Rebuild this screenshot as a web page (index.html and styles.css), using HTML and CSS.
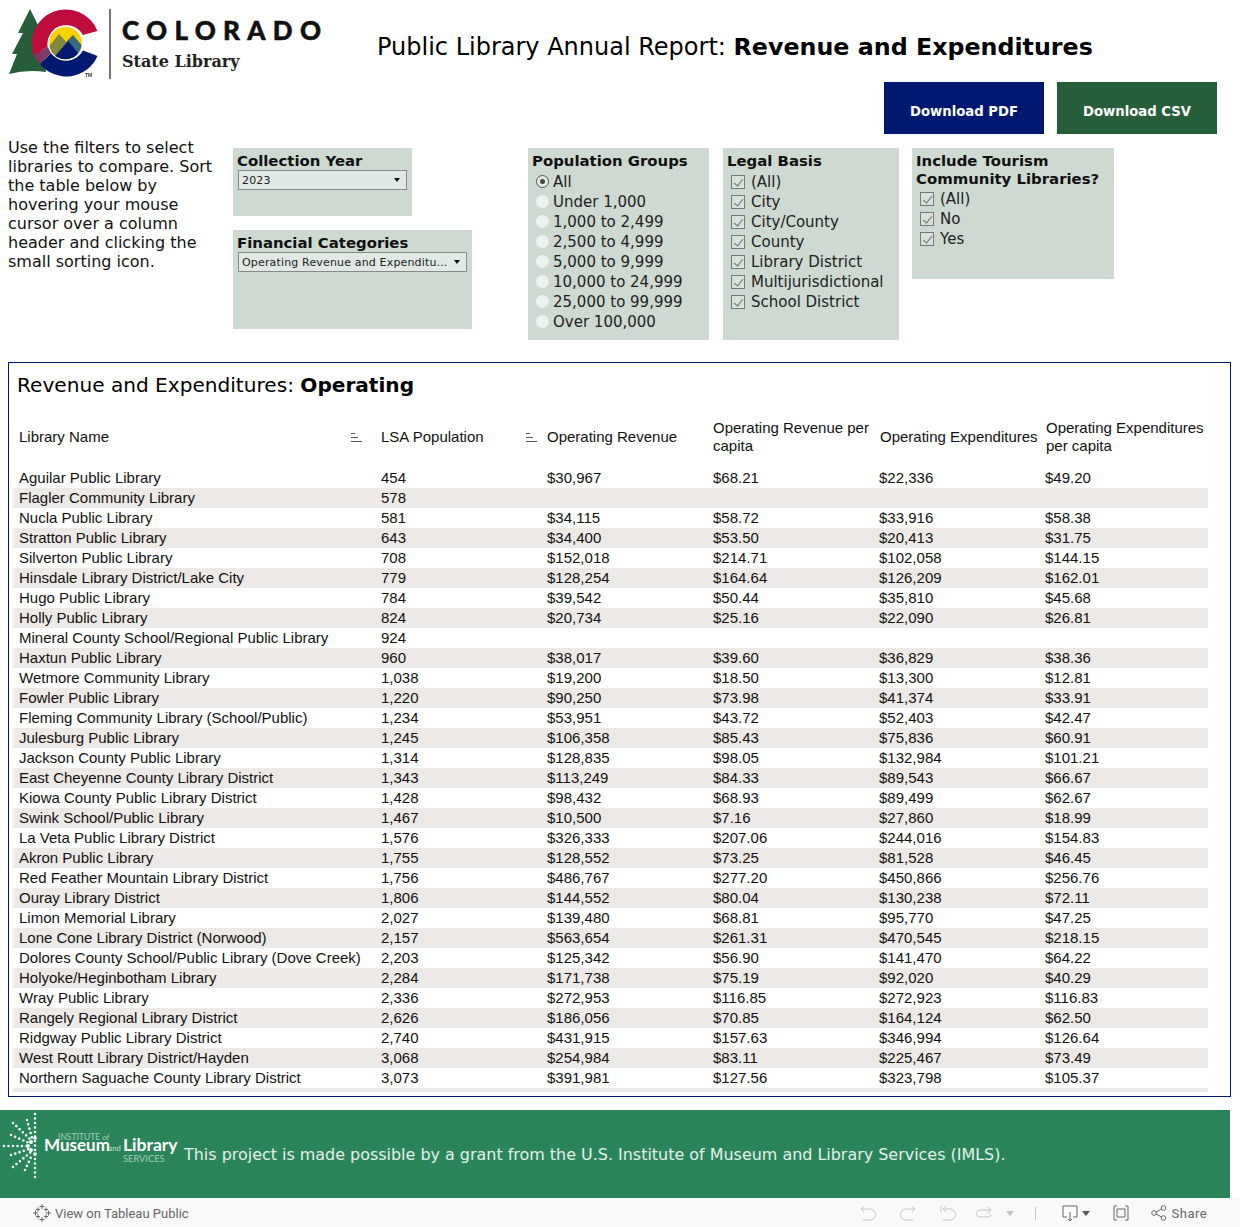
FILE: index.html
```html
<!DOCTYPE html>
<html lang="en">
<head>
<meta charset="UTF-8">
<meta name="viewport" content="width=device-width, initial-scale=1.0">
<title>Public Library Annual Report: Revenue and Expenditures</title>
<link rel="stylesheet" href="styles.css">
</head>
<body>

    <header class="top">
        <div class="brand">
            <svg class="brand-mark" width="104" height="82" viewBox="0 0 104 82">
                <!-- tree -->
                <path d="M30 9 L39 27 L46 72 Q27 69 9 74 L17 54 L12 54 L23 33 L18 33 Z" fill="#255e39"/>
                <!-- C ring -->
                <path d="M97.500 31 A34 34 0 0 0 34 56 L47.500 46.500 A19 19 0 0 1 83 35 Z" fill="#bf0d3e"/>
                <path d="M40 64 A34 34 0 0 0 97.500 56 L83 50.500 A19 19 0 0 1 51 53 Z" fill="#001970"/>
                <path d="M34 56 L47.500 46.500 L51 53 L40 64 Z" fill="#7d3a64"/>
                <!-- inner circle -->
                <circle cx="65.500" cy="43" r="17.500" fill="#fff"/>
                <clipPath id="inner"><circle cx="65.500" cy="43" r="16.300"/></clipPath>
                <g clip-path="url(#inner)">
                    <rect x="48" y="26" width="36" height="34" fill="#ffd100"/>
                    <path d="M46 50 L59 34 L72 48 L60 62 L46 62 Z" fill="#7f8a3c"/>
                    <path d="M67 41 L73 35 L86 50 L80 62 L70 56 Z" fill="#38697f"/>
                    <path d="M50 62 L68 41 L84 60 L84 64 L50 64 Z" fill="#001970"/>
                </g>
                <text class="brand-tm" x="85" y="77">TM</text>
            </svg>
            <div class="brand-text">
                <div class="brand-state">COLORADO</div>
                <div class="brand-lib">State Library</div>
            </div>
        </div>
        <h1 class="page-title">Public Library Annual Report: <b>Revenue and Expenditures</b></h1>
    </header>

    <div class="actions">
        <a class="btn btn-pdf" href="#">Download PDF</a>
        <a class="btn btn-csv" href="#">Download CSV</a>
    </div>

    <section class="filters">
        <p class="intro">Use the filters to select libraries to compare. Sort the table below by hovering your mouse cursor over a column header and clicking the small sorting icon.</p>

        <div class="filter-stack">
            <div class="card card-year">
                <div class="card-title">Collection Year</div>
                <div class="select"><span>2023</span><i class="caret"></i></div>
            </div>
            <div class="card card-cat">
                <div class="card-title">Financial Categories</div>
                <div class="select"><span>Operating Revenue and Expenditu...</span><i class="caret"></i></div>
            </div>
        </div>

        <div class="card card-pop">
            <div class="card-title">Population Groups</div>
            <div class="opt"><i class="radio on"></i>All</div>
            <div class="opt"><i class="radio"></i>Under 1,000</div>
            <div class="opt"><i class="radio"></i>1,000 to 2,499</div>
            <div class="opt"><i class="radio"></i>2,500 to 4,999</div>
            <div class="opt"><i class="radio"></i>5,000 to 9,999</div>
            <div class="opt"><i class="radio"></i>10,000 to 24,999</div>
            <div class="opt"><i class="radio"></i>25,000 to 99,999</div>
            <div class="opt"><i class="radio"></i>Over 100,000</div>
        </div>

        <div class="card card-legal">
            <div class="card-title">Legal Basis</div>
            <div class="opt"><i class="check"></i>(All)</div>
            <div class="opt"><i class="check"></i>City</div>
            <div class="opt"><i class="check"></i>City/County</div>
            <div class="opt"><i class="check"></i>County</div>
            <div class="opt"><i class="check"></i>Library District</div>
            <div class="opt"><i class="check"></i>Multijurisdictional</div>
            <div class="opt"><i class="check"></i>School District</div>
        </div>

        <div class="card card-tour">
            <div class="card-title">Include Tourism Community Libraries?</div>
            <div class="opt"><i class="check"></i>(All)</div>
            <div class="opt"><i class="check"></i>No</div>
            <div class="opt"><i class="check"></i>Yes</div>
        </div>
    </section>

    <section class="panel">
        <h2 class="panel-title">Revenue and Expenditures: <b>Operating</b></h2>
        <div class="table-wrap">
            <table>
                <colgroup>
                    <col class="col-name"><col class="col-num"><col class="col-num"><col class="col-num"><col class="col-num"><col class="col-last">
                </colgroup>
                <thead>
                    <tr>
                        <th><div class="th-sort">Library Name<i class="sort"></i></div></th>
                        <th><div class="th-sort">LSA Population<i class="sort"></i></div></th>
                        <th>Operating Revenue</th>
                        <th>Operating Revenue per capita</th>
                        <th class="th-shift">Operating Expenditures</th>
                        <th class="th-shift">Operating Expenditures per capita</th>
                    </tr>
                </thead>
                <tbody>
                    <tr><td>Aguilar Public Library</td><td>454</td><td>$30,967</td><td>$68.21</td><td>$22,336</td><td>$49.20</td></tr>
                    <tr><td>Flagler Community Library</td><td>578</td><td></td><td></td><td></td><td></td></tr>
                    <tr><td>Nucla Public Library</td><td>581</td><td>$34,115</td><td>$58.72</td><td>$33,916</td><td>$58.38</td></tr>
                    <tr><td>Stratton Public Library</td><td>643</td><td>$34,400</td><td>$53.50</td><td>$20,413</td><td>$31.75</td></tr>
                    <tr><td>Silverton Public Library</td><td>708</td><td>$152,018</td><td>$214.71</td><td>$102,058</td><td>$144.15</td></tr>
                    <tr><td>Hinsdale Library District/Lake City</td><td>779</td><td>$128,254</td><td>$164.64</td><td>$126,209</td><td>$162.01</td></tr>
                    <tr><td>Hugo Public Library</td><td>784</td><td>$39,542</td><td>$50.44</td><td>$35,810</td><td>$45.68</td></tr>
                    <tr><td>Holly Public Library</td><td>824</td><td>$20,734</td><td>$25.16</td><td>$22,090</td><td>$26.81</td></tr>
                    <tr><td>Mineral County School/Regional Public Library</td><td>924</td><td></td><td></td><td></td><td></td></tr>
                    <tr><td>Haxtun Public Library</td><td>960</td><td>$38,017</td><td>$39.60</td><td>$36,829</td><td>$38.36</td></tr>
                    <tr><td>Wetmore Community Library</td><td>1,038</td><td>$19,200</td><td>$18.50</td><td>$13,300</td><td>$12.81</td></tr>
                    <tr><td>Fowler Public Library</td><td>1,220</td><td>$90,250</td><td>$73.98</td><td>$41,374</td><td>$33.91</td></tr>
                    <tr><td>Fleming Community Library (School/Public)</td><td>1,234</td><td>$53,951</td><td>$43.72</td><td>$52,403</td><td>$42.47</td></tr>
                    <tr><td>Julesburg Public Library</td><td>1,245</td><td>$106,358</td><td>$85.43</td><td>$75,836</td><td>$60.91</td></tr>
                    <tr><td>Jackson County Public Library</td><td>1,314</td><td>$128,835</td><td>$98.05</td><td>$132,984</td><td>$101.21</td></tr>
                    <tr><td>East Cheyenne County Library District</td><td>1,343</td><td>$113,249</td><td>$84.33</td><td>$89,543</td><td>$66.67</td></tr>
                    <tr><td>Kiowa County Public Library District</td><td>1,428</td><td>$98,432</td><td>$68.93</td><td>$89,499</td><td>$62.67</td></tr>
                    <tr><td>Swink School/Public Library</td><td>1,467</td><td>$10,500</td><td>$7.16</td><td>$27,860</td><td>$18.99</td></tr>
                    <tr><td>La Veta Public Library District</td><td>1,576</td><td>$326,333</td><td>$207.06</td><td>$244,016</td><td>$154.83</td></tr>
                    <tr><td>Akron Public Library</td><td>1,755</td><td>$128,552</td><td>$73.25</td><td>$81,528</td><td>$46.45</td></tr>
                    <tr><td>Red Feather Mountain Library District</td><td>1,756</td><td>$486,767</td><td>$277.20</td><td>$450,866</td><td>$256.76</td></tr>
                    <tr><td>Ouray Library District</td><td>1,806</td><td>$144,552</td><td>$80.04</td><td>$130,238</td><td>$72.11</td></tr>
                    <tr><td>Limon Memorial Library</td><td>2,027</td><td>$139,480</td><td>$68.81</td><td>$95,770</td><td>$47.25</td></tr>
                    <tr><td>Lone Cone Library District (Norwood)</td><td>2,157</td><td>$563,654</td><td>$261.31</td><td>$470,545</td><td>$218.15</td></tr>
                    <tr><td>Dolores County School/Public Library (Dove Creek)</td><td>2,203</td><td>$125,342</td><td>$56.90</td><td>$141,470</td><td>$64.22</td></tr>
                    <tr><td>Holyoke/Heginbotham Library</td><td>2,284</td><td>$171,738</td><td>$75.19</td><td>$92,020</td><td>$40.29</td></tr>
                    <tr><td>Wray Public Library</td><td>2,336</td><td>$272,953</td><td>$116.85</td><td>$272,923</td><td>$116.83</td></tr>
                    <tr><td>Rangely Regional Library District</td><td>2,626</td><td>$186,056</td><td>$70.85</td><td>$164,124</td><td>$62.50</td></tr>
                    <tr><td>Ridgway Public Library District</td><td>2,740</td><td>$431,915</td><td>$157.63</td><td>$346,994</td><td>$126.64</td></tr>
                    <tr><td>West Routt Library District/Hayden</td><td>3,068</td><td>$254,984</td><td>$83.11</td><td>$225,467</td><td>$73.49</td></tr>
                    <tr><td>Northern Saguache County Library District</td><td>3,073</td><td>$391,981</td><td>$127.56</td><td>$323,798</td><td>$105.37</td></tr>
                    <tr><td></td><td></td><td>$</td><td>$</td><td>$</td><td>$</td></tr>
                </tbody>
            </table>
        </div>
    </section>

    <footer class="grant">
        <svg class="imls" width="180" height="88" viewBox="0 0 180 88">
            <g class="imls-rays">
                <line x1="35" y1="4" x2="35" y2="68"/>
                <line x1="4" y1="36" x2="30" y2="36"/>
                <line x1="13" y1="13" x2="31" y2="30"/>
                <line x1="13" y1="57" x2="31" y2="42"/>
                <line x1="27" y1="10" x2="32" y2="28"/>
                <line x1="25" y1="60" x2="32" y2="45"/>
                <line x1="11" y1="25" x2="29" y2="33"/>
                <line x1="11" y1="45" x2="29" y2="39"/>
            </g>
            <g fill="#fff">
                <circle cx="31" cy="32" r="2"/>
                <circle cx="31" cy="40" r="2"/>
                <circle cx="28" cy="36" r="2"/>
                <circle cx="35" cy="28" r="1.800"/>
                <circle cx="35" cy="44" r="1.800"/>
            </g>
            <text class="imls-sm" x="58" y="30">INSTITUTE <tspan font-style="italic">of</tspan></text>
            <text class="imls-lg" x="44" y="41">Museum</text>
            <text class="imls-and" x="108.500" y="41">and</text>
            <text class="imls-lib" x="123" y="41">Library</text>
            <text class="imls-sv" x="123" y="52">SERVICES</text>
        </svg>
        <p class="grant-text">This project is made possible by a grant from the U.S. Institute of Museum and Library Services (IMLS).</p>
    </footer>

    <div class="toolbar">
        <div class="tb-left">
            <svg width="18" height="18" viewBox="0 0 18 18" class="tb-icon">
                <path d="M9 0v5M6.500 2.500h5M9 13v5M6.500 15.500h5M2.500 6.500v5M0 9h5M15.500 6.500v5M13 9h5M5 3.500v4M3 5.500h4M13 3.500v4M11 5.500h4M5 10.500v4M3 12.500h4M13 10.500v4M11 12.500h4"/>
            </svg>
            <span>View on Tableau Public</span>
        </div>
        <div class="tb-right">
            <svg class="tb-icon tb-off" width="16" height="16" viewBox="0 0 16 16"><path d="M4 1L1 4l3 3M1 4h9a5 5 0 0 1 0 11H3"/></svg>
            <svg class="tb-icon tb-off" width="16" height="16" viewBox="0 0 16 16"><path d="M12 1l3 3-3 3M15 4H6a5 5 0 0 0 0 11h7"/></svg>
            <svg class="tb-icon tb-off" width="16" height="16" viewBox="0 0 16 16"><path d="M1 1v6M6 1L3 4l3 3M3 4h7a5 5 0 0 1 0 11H3"/></svg>
            <svg class="tb-icon tb-off tb-refresh" width="16" height="16" viewBox="0 0 16 16"><path d="M12 2l3 3-3 3M14 5H4a3.500 3.500 0 0 0 0 7h8a3 3 0 0 0 3-3"/></svg>
            <i class="tb-caret tb-caret-off"></i>
            <i class="tb-sep"></i>
            <div class="tb-group">
                <svg class="tb-icon tb-on" width="16" height="17" viewBox="0 0 16 17"><path d="M5 12H1V1h14v11h-4M8 7v9M6 14l2 2 2-2"/></svg>
                <i class="tb-caret"></i>
            </div>
            <svg class="tb-icon tb-on tb-full" width="16" height="16" viewBox="0 0 16 16"><path d="M4 1H1v14h3M12 1h3v14h-3M4 4h8v8H4z"/></svg>
            <div class="tb-share">
                <svg class="tb-icon tb-on" width="16" height="16" viewBox="0 0 16 16"><circle cx="3" cy="8" r="2.300"/><circle cx="12.500" cy="3" r="2.300"/><circle cx="12.500" cy="13" r="2.300"/><path d="M5 7l5.500-3M5 9l5.500 3"/></svg>
                <span class="tb-share-label">Share</span>
            </div>
        </div>
    </div>

</body>
</html>
```

FILE: styles.css
```css
* {
    box-sizing: border-box;
}
html, body {
    margin: 0;
    height: 1227px;
    overflow: hidden;
}
body {
    width: 1240px;
    background: #fff;
    color: #000;
    font-family: "DejaVu Sans", sans-serif;
}
a {
    color: inherit;
    text-decoration: none;
}
h1, h2, p {
    margin: 0;
    font-weight: normal;
}

/* header */
.top {
    display: flex;
    align-items: flex-start;
    height: 82px;
}
.brand {
    display: flex;
    width: 377px;
    height: 82px;
}
.brand-mark {
    flex: none;
    filter: blur(0.4px);
}
.brand-tm {
    font-family: "Liberation Sans", sans-serif;
    font-size: 5px;
    font-weight: bold;
    fill: #333;
}
.brand-text {
    height: 70px;
    margin: 9px 0 0 5px;
    padding: 9px 0 0 11px;
    border-left: 2px solid #777;
}
.brand-state {
    font-family: Lato, sans-serif;
    font-weight: 900;
    font-size: 26px;
    line-height: 24px;
    letter-spacing: 7.300px;
    color: #111;
    -webkit-text-stroke: 0.5px #111;
}
.brand-lib {
    margin-top: 9px;
    font-family: "DejaVu Serif", serif;
    font-weight: bold;
    font-size: 16px;
    line-height: 22px;
    color: #222;
}
.page-title {
    margin-top: 31px;
    font-size: 24px;
    line-height: 32px;
    white-space: nowrap;
}
.page-title b {
    font-size: 23.750px;
}

/* buttons */
.actions {
    display: flex;
    justify-content: flex-end;
    gap: 13px;
    padding-right: 23px;
}
.btn {
    display: flex;
    align-items: center;
    justify-content: center;
    width: 160px;
    height: 52px;
    padding-top: 4px;
    color: #fff;
    font-family: "DejaVu Sans Condensed", "DejaVu Sans", sans-serif;
    font-stretch: condensed;
    font-weight: bold;
    font-size: 14.700px;
}
.btn-pdf {
    background: #001970;
}
.btn-csv {
    background: #255e39;
}

/* filters */
.filters {
    display: flex;
    align-items: flex-start;
    height: 228px;
    padding-left: 8px;
}
.intro {
    width: 225px;
    padding-right: 8px;
    margin-top: 4px;
    font-size: 16px;
    line-height: 19px;
    color: #111;
}
.filter-stack {
    display: flex;
    flex-direction: column;
    gap: 14px;
    margin-top: 14px;
}
.card {
    background: #cdd9d1;
    padding: 4px;
    font-size: 15px;
}
.card-title {
    font-weight: bold;
    font-size: 14.900px;
    line-height: 18px;
    color: #111;
}
.card-year {
    width: 179px;
    height: 68px;
}
.card-cat {
    width: 239px;
    height: 99px;
}
.card-pop {
    width: 181px;
    height: 192px;
    margin: 14px 0 0 56px;
}
.card-legal {
    width: 176px;
    height: 192px;
    margin: 14px 0 0 14px;
}
.card-tour {
    width: 202px;
    height: 131px;
    margin: 14px 0 0 13px;
}
.select {
    display: flex;
    align-items: center;
    justify-content: space-between;
    height: 20px;
    margin: 0 1px;
    padding: 0 6px 0 3px;
    background: #e0e9e4;
    border: 1px solid #888;
    font-size: 11px;
    letter-spacing: 0.160px;
    white-space: nowrap;
    color: #222;
}
.caret {
    border: 3.500px solid transparent;
    border-top: 4px solid #111;
    border-bottom: 0;
}
.opt {
    display: flex;
    align-items: center;
    height: 20px;
    padding-left: 4px;
    color: #222;
}
.card-title + .opt {
    margin-top: 2px;
}
.card-tour .card-title + .opt {
    margin-top: 1px;
}
.radio {
    position: relative;
    flex: none;
    width: 13px;
    height: 13px;
    margin: 0 4px 2px 0;
    border-radius: 50%;
    background: #eef2ef;
}
.radio.on {
    border: 1px solid #555;
    background: #e4ebe6;
}
.radio.on::after {
    content: "";
    position: absolute;
    left: 3px;
    top: 3px;
    width: 5px;
    height: 5px;
    border-radius: 50%;
    background: #444;
}
.check {
    position: relative;
    flex: none;
    width: 14px;
    height: 14px;
    margin: 0 6px 1px 0;
    border: 1px solid #777;
    background: #d8e2dc;
}
.check::after {
    content: "";
    position: absolute;
    left: 4px;
    top: 1px;
    width: 4px;
    height: 8px;
    border-right: 1px solid #666;
    border-bottom: 1px solid #666;
    transform: rotate(38deg);
}

/* table panel */
.panel {
    width: 1223px;
    height: 735px;
    margin-left: 8px;
    padding: 0 0 4px 4px;
    border: 1px solid #001970;
}
.panel-title {
    height: 55px;
    padding: 9px 0 0 4px;
    font-size: 20.100px;
    line-height: 26px;
}
.table-wrap {
    height: 674px;
    overflow: hidden;
}
table {
    width: 1195px;
    table-layout: fixed;
    border-collapse: collapse;
    font-family: "Liberation Sans", sans-serif;
    font-size: 15px;
    color: #111;
}
.col-name {
    width: 362px;
}
.col-num {
    width: 166px;
}
.col-last {
    width: 169px;
}
th {
    height: 50px;
    padding: 0 4px 12px 6px;
    font-weight: normal;
    line-height: 18px;
    text-align: left;
}
.th-shift {
    padding-right: 0;
    padding-left: 7px;
}
.th-shift:last-child {
    padding-right: 4px;
}
.th-sort {
    display: flex;
    align-items: center;
    justify-content: space-between;
}
.sort {
    display: block;
    width: 11px;
    height: 9px;
    background:
        linear-gradient(#555, #555) 0 0 / 4px 1px no-repeat,
        linear-gradient(#555, #555) 0 4px / 7px 1px no-repeat,
        linear-gradient(#555, #555) 0 8px / 11px 1px no-repeat;
}
th:first-child .sort {
    margin-right: 9px;
}
td {
    height: 20px;
    padding: 0 0 0 6px;
    line-height: 20px;
    white-space: nowrap;
}
tbody tr:nth-child(even) {
    background: #ede9e6;
}

/* grant footer */
.grant {
    display: flex;
    align-items: center;
    width: 1230px;
    height: 88px;
    margin-top: 13px;
    background: #2a855b;
    color: #e6f0ea;
}
.imls {
    flex: none;
    margin-right: 4px;
}
.imls-rays line {
    stroke: #fff;
    stroke-width: 2.600px;
    stroke-linecap: round;
    stroke-dasharray: 0 4.500;
}
.imls text {
    font-family: Lato, sans-serif;
    fill: #fff;
}
.imls .imls-sm {
    font-size: 8.500px;
    fill: #a5cdb7;
}
.imls .imls-sv {
    font-size: 9.300px;
    fill: #a5cdb7;
}
.imls .imls-lg {
    font-size: 17px;
    font-weight: bold;
}
.imls .imls-and {
    font-size: 7.500px;
    fill: #c5e0d1;
}
.imls .imls-lib {
    font-size: 17.500px;
    font-weight: bold;
}
.grant-text {
    padding-top: 1px;
    font-size: 15.950px;
    white-space: nowrap;
}

/* viz toolbar */
.toolbar {
    display: flex;
    align-items: center;
    justify-content: space-between;
    height: 29px;
    padding: 1px 33px 0 33px;
    background: #f9f9f9;
    font-family: Roboto, sans-serif;
    font-size: 13px;
    color: #666;
}
.tb-left, .tb-right, .tb-group, .tb-share {
    display: flex;
    align-items: center;
}
.tb-left {
    gap: 4px;
}
.tb-right {
    gap: 24px;
}
.tb-group {
    gap: 4px;
}
.tb-share {
    gap: 5px;
    margin-left: -2px;
}
.tb-share-label {
    letter-spacing: 0.450px;
}
.tb-icon {
    display: block;
    fill: none;
    stroke: #666;
    stroke-width: 1px;
}
.tb-off {
    stroke: #c4c4c4;
}
.tb-refresh {
    margin-left: -4px;
}
.tb-full {
    margin-left: -1px;
}
.tb-caret {
    border: 4px solid transparent;
    border-top: 5px solid #555;
    border-bottom: 0;
}
.tb-caret-off {
    margin-left: -10px;
    border-top-color: #c4c4c4;
}
.tb-sep {
    width: 1px;
    height: 13px;
    margin: 0 2px 0 -3px;
    background: #c4c4c4;
}
```
